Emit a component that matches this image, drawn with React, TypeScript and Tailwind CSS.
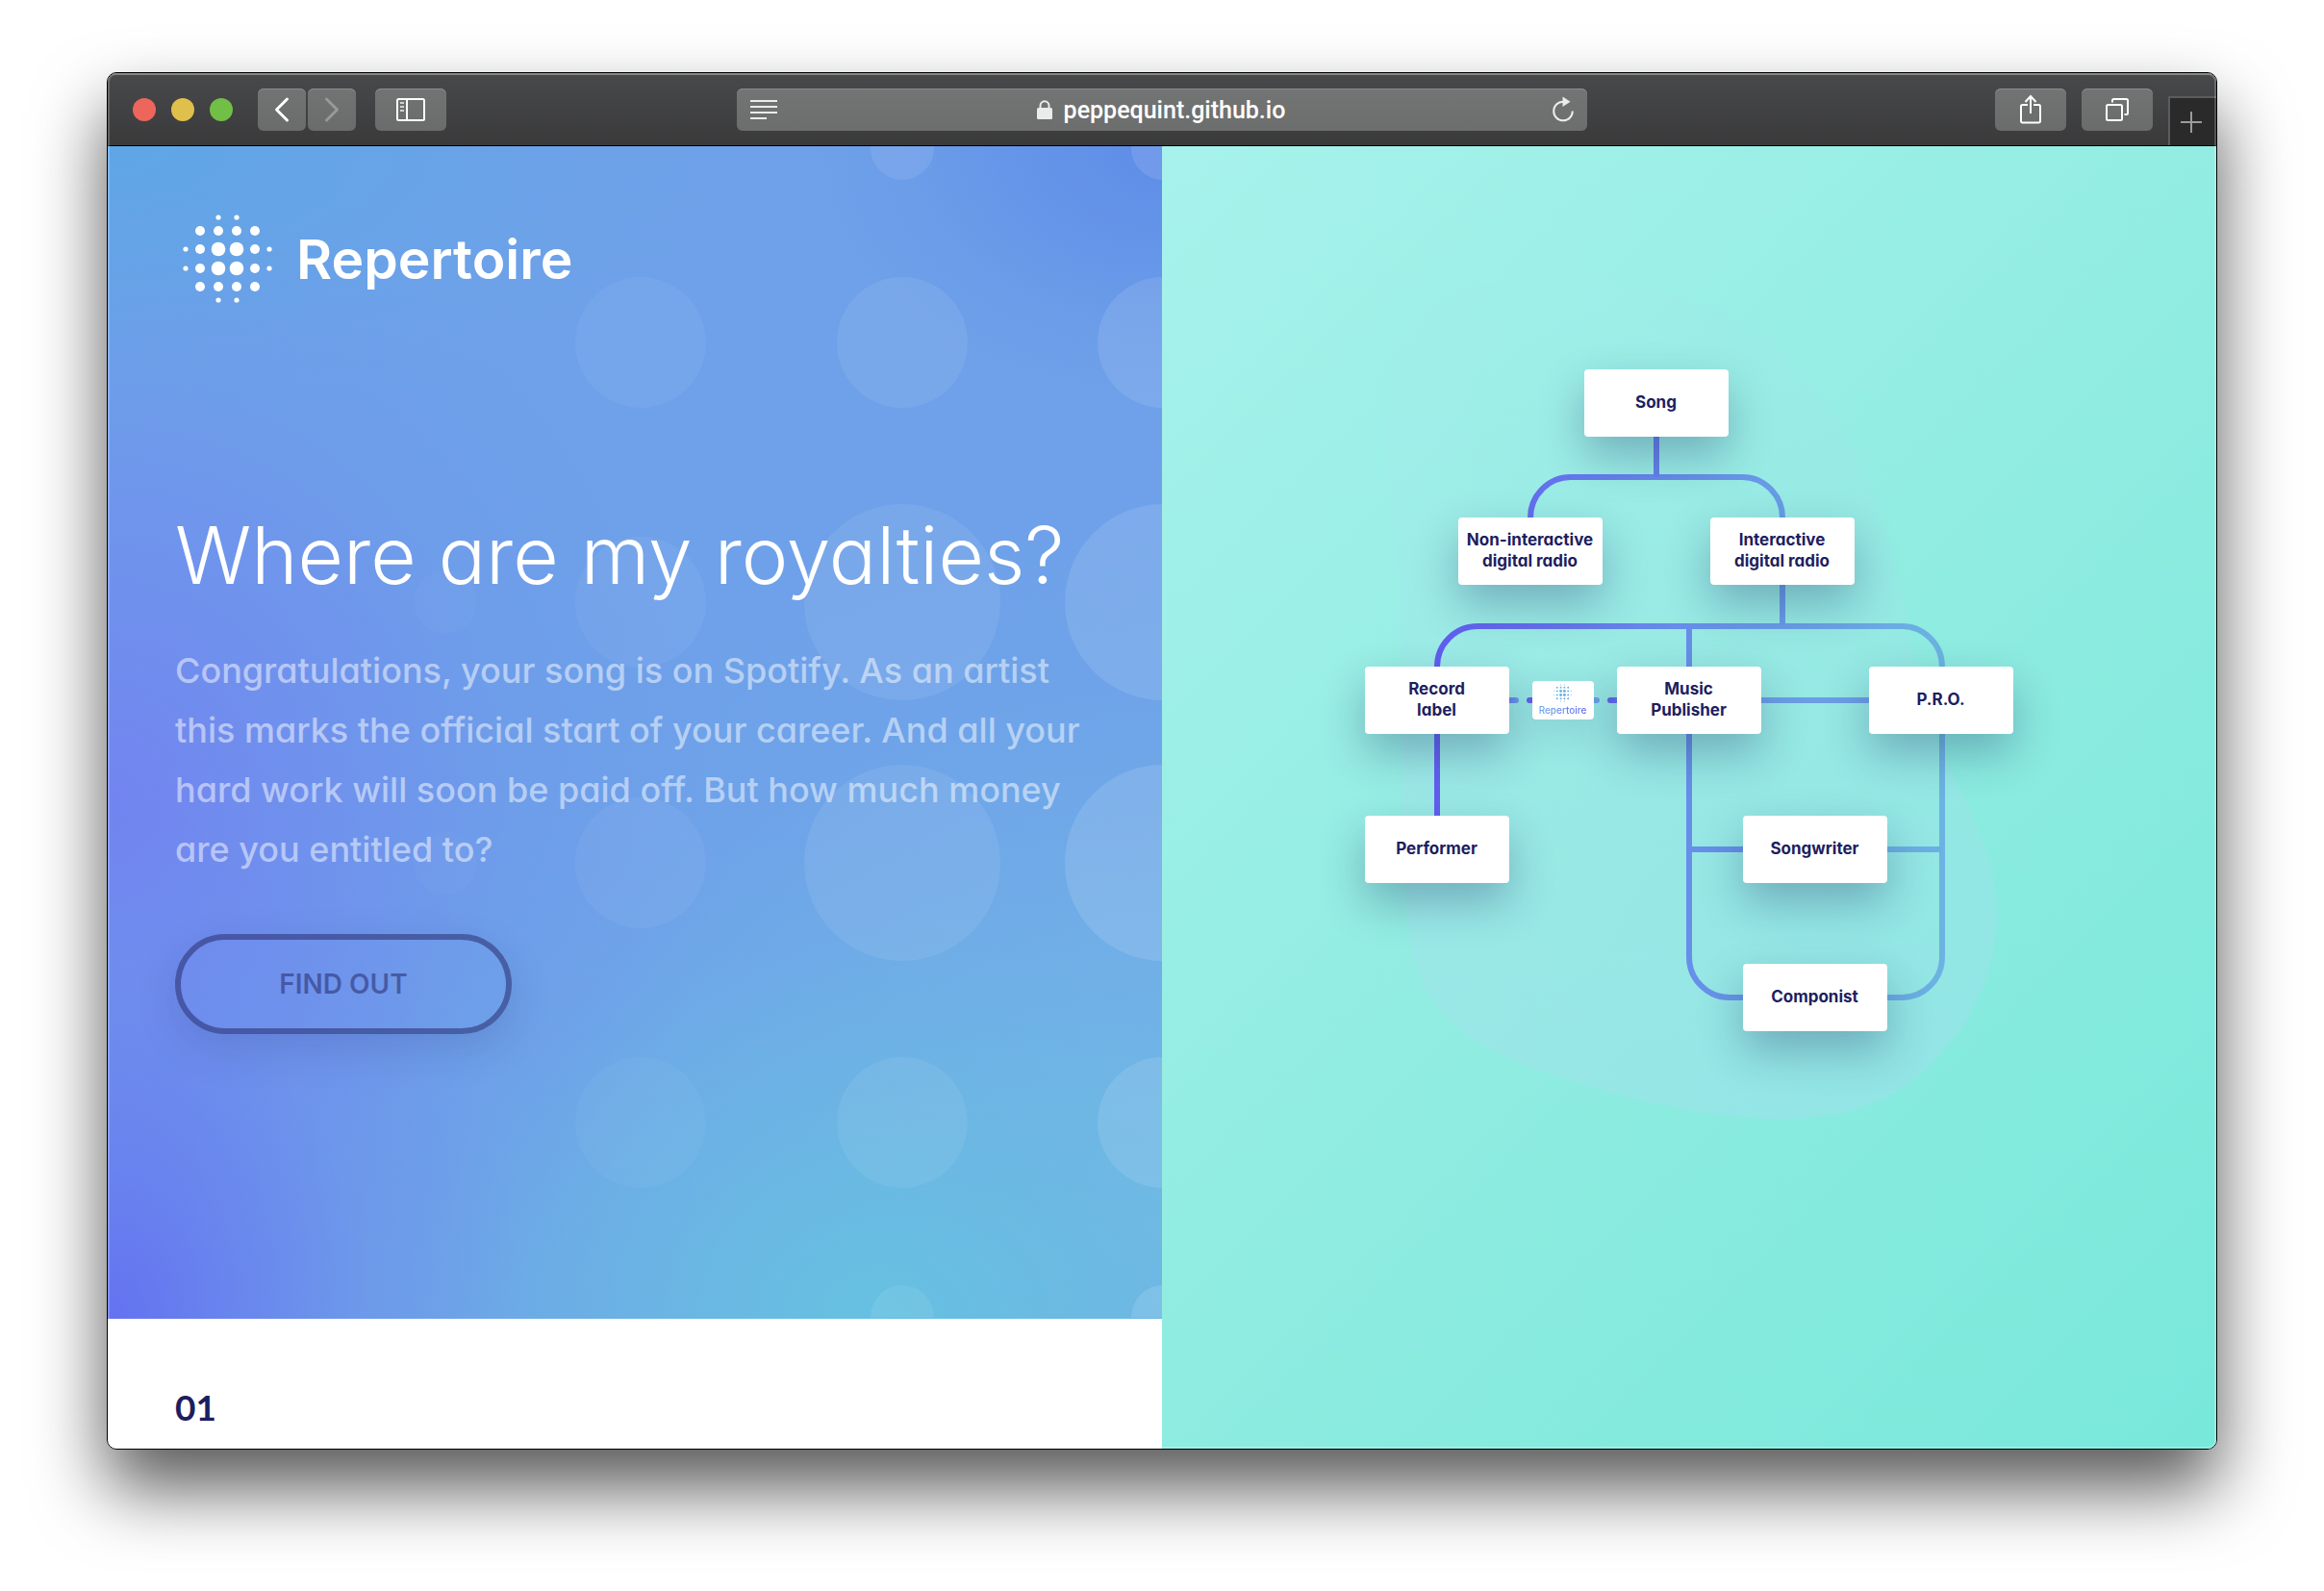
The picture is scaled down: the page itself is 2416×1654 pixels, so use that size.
import type { ReactNode } from "react";

const DOTS: [number, number, number][] = [
  [38, 4, 2.6], [57, 4, 2.6],
  [19, 18, 5], [38, 18, 5], [57, 18, 5], [76, 18, 5],
  [4, 37, 2.6], [19, 37, 5], [38, 37, 7.3], [57, 37, 7.3], [76, 37, 5], [91, 37, 2.6],
  [4, 57, 2.6], [19, 57, 5], [38, 57, 7.3], [57, 57, 7.3], [76, 57, 5], [91, 57, 2.6],
  [19, 76, 5], [38, 76, 5], [57, 76, 5], [76, 76, 5],
  [38, 90, 2.6], [57, 90, 2.6],
];

function DotMark({ className, gradient }: { className: string; gradient?: boolean }) {
  return (
    <svg viewBox="0 0 95 94" className={className} aria-hidden="true">
      <defs>
        <linearGradient id="markFill" gradientUnits="userSpaceOnUse" x1="0" y1="0" x2="95" y2="94">
          <stop offset="0" stopColor="#6fc3e2" />
          <stop offset="1" stopColor="#68a0e8" />
        </linearGradient>
      </defs>
      {DOTS.map(([x, y, r], i) => (
        <circle key={i} cx={x} cy={y} r={r} fill={gradient ? "url(#markFill)" : "#fff"} />
      ))}
    </svg>
  );
}

function ToolButton({ label, className, children }: { label: string; className: string; children: ReactNode }) {
  return (
    <button
      type="button"
      aria-label={label}
      className={`flex h-11 shrink-0 items-center justify-center rounded-md bg-linear-to-b from-[#727373] to-[#6a6b6b] shadow-[inset_0_1px_0_#8b8c8c] ${className}`}
    >
      {children}
    </button>
  );
}

function Toolbar() {
  return (
    <header className="grid h-[76px] shrink-0 grid-cols-[1fr_minmax(0,884px)_1fr] items-start border-b border-black bg-linear-to-b from-[#48494b] to-[#3a3a3b] shadow-[inset_0_2px_0_#6a6c6c]">
      <div className="flex items-center pt-4 pl-[26px]">
        <div className="flex gap-4">
          <button type="button" aria-label="Close" className="size-6 rounded-full bg-[#ec665c]" />
          <button type="button" aria-label="Minimize" className="size-6 rounded-full bg-[#e0c04c]" />
          <button type="button" aria-label="Zoom" className="size-6 rounded-full bg-[#71bf47]" />
        </div>
        <div className="ml-[26px] flex gap-0.5">
          <ToolButton label="Back" className="w-[50px]">
            <svg width="16" height="28" viewBox="0 0 16 28" fill="none" stroke="#fff" strokeWidth="3" strokeLinecap="round" strokeLinejoin="round">
              <path d="M13.5 3 L2.5 14 L13.5 25" />
            </svg>
          </ToolButton>
          <ToolButton label="Forward" className="w-[50px]">
            <svg width="16" height="28" viewBox="0 0 16 28" fill="none" stroke="#989999" strokeWidth="3" strokeLinecap="round" strokeLinejoin="round">
              <path d="M2.5 3 L13.5 14 L2.5 25" />
            </svg>
          </ToolButton>
        </div>
        <ToolButton label="Show sidebar" className="ml-5 w-[74px]">
          <svg width="30" height="24" viewBox="0 0 30 24" fill="none" stroke="#fff" strokeWidth="2">
            <rect x="1" y="1" width="28" height="22" rx="1.5" />
            <path d="M11 1 V23" />
            <path d="M4 5 H8 M4 9 H8 M4 13 H8" stroke="#d0d0d0" />
          </svg>
        </ToolButton>
      </div>

      <div className="mt-4 flex h-11 items-center justify-between rounded-md bg-linear-to-b from-[#737474] to-[#6c6d6d] px-3.5 shadow-[inset_0_1px_0_#8b8c8c]">
        <button type="button" aria-label="Reader view">
          <svg width="28" height="20" viewBox="0 0 28 20" stroke="#ebebeb" strokeWidth="2">
            <path d="M0 1 H28 M0 7 H28 M0 13 H28 M0 19 H17" />
          </svg>
        </button>
        <div className="flex items-center gap-3">
          <svg width="16" height="20" viewBox="0 0 16 20" aria-hidden="true">
            <path d="M3.5 9 V6 a4.5 4.8 0 0 1 9 0 V9" fill="none" stroke="#ebebeb" strokeWidth="2" />
            <rect x="0" y="8" width="16" height="12" rx="1.5" fill="#ebebeb" />
          </svg>
          <span className="pt-0.5 pr-2 font-['Roboto',sans-serif] text-[25px] leading-8 font-medium text-white">peppequint.github.io</span>
        </div>
        <button type="button" aria-label="Reload">
          <svg width="22" height="28" viewBox="0 0 22 28" fill="none">
            <path d="M20.8 15.5 a9.8 9.8 0 1 1 -9.8 -9.8" stroke="#ebebeb" strokeWidth="2" />
            <path d="M10.5 0.5 L18.5 5.7 L10.5 11 Z" fill="#ebebeb" />
          </svg>
        </button>
      </div>

      <div className="flex h-full items-start justify-end gap-4 pt-4">
        <ToolButton label="Share" className="w-[74px]">
          <svg width="24" height="32" viewBox="0 0 24 32" fill="none" stroke="#fff" strokeWidth="2">
            <path d="M9 11 H3.5 a1.5 1.5 0 0 0 -1.5 1.5 V28 a1.5 1.5 0 0 0 1.5 1.5 H20.5 a1.5 1.5 0 0 0 1.5 -1.5 V12.5 a1.5 1.5 0 0 0 -1.5 -1.5 H15" />
            <path d="M12 20 V2 M6.5 8 L12 2 L17.5 8" />
          </svg>
        </ToolButton>
        <ToolButton label="Show all tabs" className="w-[74px]">
          <svg width="24" height="24" viewBox="0 0 24 24" fill="none" stroke="#fff" strokeWidth="2">
            <rect x="1" y="7" width="16" height="16" rx="1.5" />
            <path d="M7 4.5 V2.5 a1.5 1.5 0 0 1 1.5 -1.5 H21.5 a1.5 1.5 0 0 1 1.5 1.5 V15.5 a1.5 1.5 0 0 1 -1.5 1.5 H19.5" />
          </svg>
        </ToolButton>
        <button type="button" aria-label="New tab" className="mt-2 flex h-[51px] w-[50px] items-center justify-center border-t-2 border-l-2 border-[#5b5c5d] bg-[#2a2a2a] pr-1">
          <svg width="22" height="22" viewBox="0 0 22 22" stroke="#9b9b9b" strokeWidth="2">
            <path d="M11 0 V22 M0 11 H22" />
          </svg>
        </button>
      </div>
    </header>
  );
}

/* Oversized dot pattern, an enlarged crop of the logo mark, pinned to the right edge. */
const BUBBLES: [number, number, number, number][] = [
  [826, 2, 33, 0.09], [1097, 2, 33, 0.11],
  [554, 204, 68, 0.05], [826, 204, 68, 0.08], [1097, 204, 68, 0.1],
  [351, 474, 33, 0.025], [554, 474, 68, 0.05], [826, 474, 102, 0.08], [1097, 474, 102, 0.11],
  [351, 745, 33, 0.025], [554, 745, 68, 0.05], [826, 745, 102, 0.08], [1097, 745, 102, 0.12],
  [554, 1015, 68, 0.04], [826, 1015, 68, 0.07], [1097, 1015, 68, 0.11],
  [826, 1217, 33, 0.08], [1097, 1217, 33, 0.12],
];

function Hero() {
  return (
    <section
      className="relative h-[90%] shrink-0 overflow-hidden bg-[#6ea1e9] bg-[radial-gradient(ellipse_34%_22%_at_100%_0%,#5f8de8_0%,#5f8de8aa_35%,#5f8de833_72%,#5f8de800_100%),radial-gradient(ellipse_60%_24%_at_0%_0%,#5fa6e6_0%,#61a5e688_45%,#64a5e62a_75%,#66a5e600_100%),radial-gradient(ellipse_40%_46%_at_0%_100%,#6472f0_0%,#6678f0a6_30%,#6a84ee40_62%,#6c90ec00_100%),radial-gradient(ellipse_58%_56%_at_0%_56%,#7284f0_0%,#7089efa0_35%,#6e92ec40_66%,#6e98ea00_100%),radial-gradient(ellipse_58%_42%_at_73%_100%,#66c1e1_0%,#69b8e299_45%,#6cb0e42e_78%,#6caee600_100%),radial-gradient(ellipse_76%_60%_at_100%_92%,#74bce6_0%,#72b4e799_45%,#6eaae82e_78%,#6ea6e800_100%)] pt-[70px] pr-[60px] pl-[70px]"
    >
      <svg width="1096" height="1218" viewBox="0 0 1096 1218" className="absolute top-0 right-0" aria-hidden="true">
        {BUBBLES.map(([x, y, r, o], i) => (
          <circle key={i} cx={x} cy={y} r={r} fill="#fff" fillOpacity={o} />
        ))}
      </svg>
      <div className="relative">
        <a href="#home" className="ml-[7px] inline-flex items-center gap-6 align-top">
          <DotMark className="h-[94px] w-[95px]" />
          <span className="pt-0.5 text-[57px] leading-[72px] font-semibold text-white">Repertoire</span>
        </a>
        <h1 className="mt-[212px] text-[82px] leading-[100px] font-light text-white">Where are my royalties?</h1>
        <p className="mt-[38px] text-[36px] leading-[62px] font-medium text-white/50">
          Congratulations, your song is on Spotify. As an artist this marks the official start of your career. And all
          your hard work will soon be paid off. But how much money are you entitled to?
        </p>
        <button
          type="button"
          className="mt-[57px] h-[104px] w-[350px] rounded-full border-6 border-[#1f1f60]/50 text-[28px] font-semibold text-[#1f1f60]/50 shadow-[0_16px_44px_rgba(31,31,96,0.15)]"
        >
          FIND OUT
        </button>
      </div>
    </section>
  );
}

function Card({ className, children }: { className: string; children: ReactNode }) {
  return (
    <div
      className={`absolute flex h-[70px] w-[150px] items-center justify-center rounded-[4px] bg-white pb-0.5 text-center text-[17px] leading-[22px] font-bold text-[#1d1e5f] shadow-[0_20px_46px_rgba(28,50,100,0.32)] ${className}`}
    >
      {children}
    </div>
  );
}

function RoyaltyDiagram() {
  return (
    <div className="relative h-[689px] w-[675px]">
      <svg width="675" height="689" viewBox="0 0 675 689" fill="none" className="absolute inset-0 overflow-visible" aria-hidden="true">
        <defs>
          <linearGradient id="blob" gradientUnits="userSpaceOnUse" x1="250" y1="-90" x2="330" y2="780">
            <stop offset="0" stopColor="#b8d8f0" stopOpacity="0.03" />
            <stop offset="1" stopColor="#b0daf4" stopOpacity="0.3" />
          </linearGradient>
          <linearGradient id="wire" gradientUnits="userSpaceOnUse" x1="75" y1="0" x2="600" y2="0">
            <stop offset="0" stopColor="#615df0" />
            <stop offset="0.2" stopColor="#6470ee" />
            <stop offset="0.5" stopColor="#678fe9" />
            <stop offset="1" stopColor="#6cb3e2" />
          </linearGradient>
          <linearGradient id="dashA" gradientUnits="userSpaceOnUse" x1="140" y1="0" x2="160" y2="0">
            <stop offset="0" stopColor="#6268ee" />
            <stop offset="1" stopColor="#6a9fe6" />
          </linearGradient>
          <linearGradient id="dashB" gradientUnits="userSpaceOnUse" x1="168" y1="0" x2="244" y2="0">
            <stop offset="0" stopColor="#6060ee" />
            <stop offset="1" stopColor="#6aa6e4" />
          </linearGradient>
          <linearGradient id="dashC" gradientUnits="userSpaceOnUse" x1="252" y1="0" x2="290" y2="0">
            <stop offset="0" stopColor="#6060ee" />
            <stop offset="1" stopColor="#6aa6e4" />
          </linearGradient>
        </defs>
        <path
          fill="url(#blob)"
          d="M18 17 C20 -40 60 -80 119 -88 C200 -100 330 -86 394 -47 C470 0 515 80 545 180 C568 262 572 325 590 375 C612 432 657 490 657 566 C657 660 592 738 525 764 C445 795 330 775 215 740 C120 710 58 680 46 585 C36 500 40 380 38 256 C34 160 16 80 18 17 Z"
        />
        <g stroke="url(#wire)" strokeWidth="6">
          <path d="M172 154 a42 42 0 0 1 42 -42 H392 a42 42 0 0 1 42 42" />
          <path d="M75 309 a42 42 0 0 1 42 -42 H558 a42 42 0 0 1 42 42 V611 a42 42 0 0 1 -42 42 H379 a42 42 0 0 1 -42 -42 V267" />
        </g>
        <path d="M303 70 V112" stroke="#6480ea" strokeWidth="6" />
        <path d="M434 224 V267" stroke="#689be7" strokeWidth="6" />
        <path d="M75 379 V464" stroke="#625ff0" strokeWidth="6" />
        <path d="M337 344 H525" stroke="#6a9ee6" strokeWidth="6" />
        <path d="M337 499 H393" stroke="#678fe9" strokeWidth="6" />
        <path d="M543 499 H600" stroke="#6bafe3" strokeWidth="6" />
        <rect x="140" y="341" width="20" height="6" rx="3" fill="url(#dashA)" />
        <rect x="168" y="341" width="76" height="6" rx="3" fill="url(#dashB)" />
        <rect x="252" y="341" width="30" height="6" rx="3" fill="url(#dashC)" />
      </svg>
      <Card className="top-0 left-[228px]">Song</Card>
      <Card className="top-[154px] left-[97px]">Non-interactive<br />digital radio</Card>
      <Card className="top-[154px] left-[359px]">Interactive<br />digital radio</Card>
      <Card className="top-[309px] left-0">Record<br />label</Card>
      <Card className="top-[309px] left-[262px]">Music<br />Publisher</Card>
      <Card className="top-[309px] left-[524px]">P.R.O.</Card>
      <Card className="top-[464px] left-0">Performer</Card>
      <Card className="top-[464px] left-[393px]">Songwriter</Card>
      <Card className="top-[618px] left-[393px]">Componist</Card>
      <div className="absolute top-[324px] left-[174px] flex h-10 w-16 flex-col items-center rounded-[4px] bg-white pt-[3px] shadow-[0_12px_40px_rgba(28,50,100,0.16)]">
        <DotMark gradient className="h-[19px] w-[19px]" />
        <span className="bg-linear-to-r from-[#6aa9e6] to-[#6366ee] bg-clip-text text-[10px] leading-4 font-medium text-transparent">
          Repertoire
        </span>
      </div>
    </div>
  );
}

export default function App() {
  return (
    <div className="h-screen bg-white px-[111px] pt-[75px] pb-[147px] font-['Inter',sans-serif] [font-feature-settings:'cv11']">
      <div className="flex h-full flex-col rounded-[10px] shadow-[0_40px_74px_rgba(0,0,0,0.66)]">
        <div className="relative flex min-h-0 flex-1 flex-col overflow-hidden rounded-[10px] border border-black bg-white">
          <Toolbar />
          <main className="grid min-h-0 flex-1 grid-cols-2">
            <div className="flex min-h-0 flex-col overflow-hidden">
              <Hero />
              <section className="flex-1 pt-[68px] pl-[70px]">
                <h2 className="font-['Lato',sans-serif] text-[37px] leading-[48px] font-bold text-[#1d1e5f]">01</h2>
              </section>
            </div>
            <div className="flex items-center justify-center bg-linear-135 from-[#a7f2ec] via-[#90ece1] to-[#78e8db] pb-[202px]">
              <RoyaltyDiagram />
            </div>
          </main>
          <div className="pointer-events-none absolute inset-0 rounded-[9px] border-2 border-white/20" />
        </div>
      </div>
    </div>
  );
}
